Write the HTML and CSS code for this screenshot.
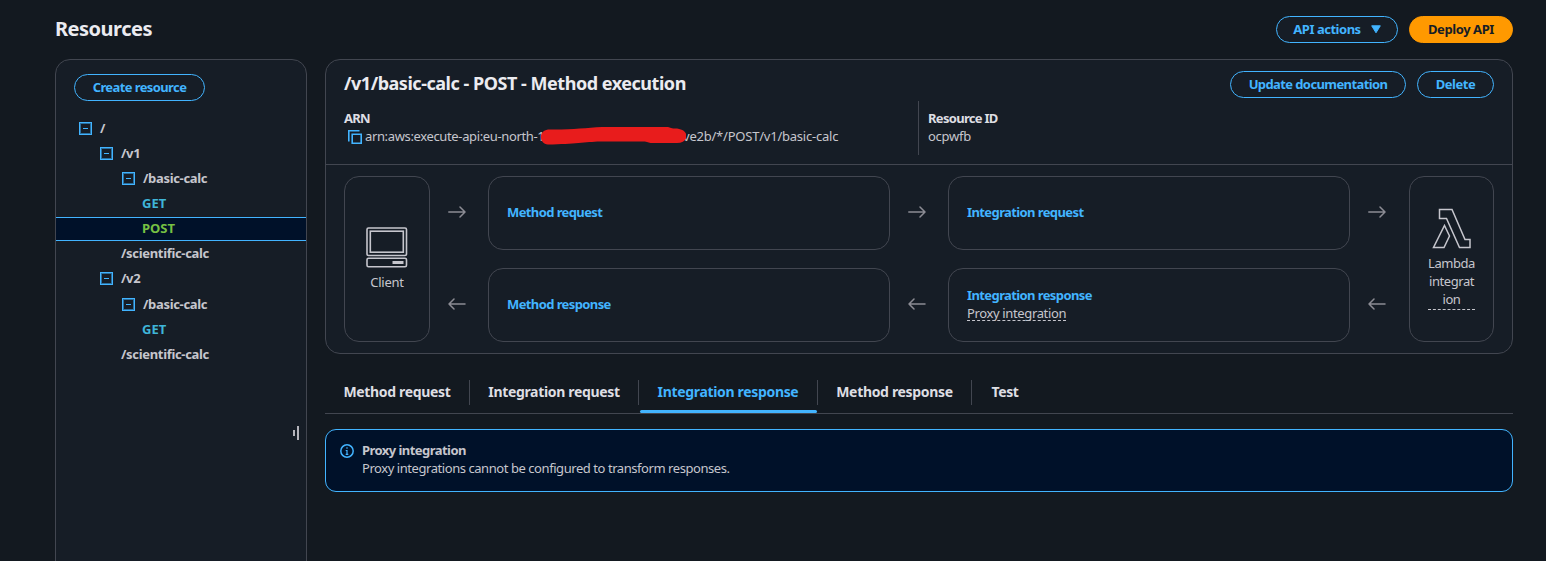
FILE: index.html
```html
<!DOCTYPE html>
<html lang="en">
<head>
<meta charset="utf-8">
<title>Resources</title>
<link rel="stylesheet" href="styles.css">
</head>
<body>
<div class="page">
  <header class="page-header">
    <h1 class="page-title">Resources</h1>
    <div class="actions">
      <button class="btn btn-menu"><span>API actions</span><svg class="caret" width="10" height="9" viewBox="0 0 10 9"><path d="M.7.8h8.600L5 7.800z" fill="currentColor" stroke="currentColor" stroke-linejoin="round"/></svg></button>
      <button class="btn btn-primary">Deploy API</button>
    </div>
  </header>
  <div class="columns">
    <aside class="sidebar">
      <button class="btn btn-create">Create resource</button>
      <ul class="tree">
        <li class="row d0"><i class="toggle"></i><span>/</span></li>
        <li class="row d1"><i class="toggle"></i><span>/v1</span></li>
        <li class="row d2"><i class="toggle"></i><span>/basic-calc</span></li>
        <li class="row d3 get"><span>GET</span></li>
        <li class="row d3 post selected"><span>POST</span></li>
        <li class="row d2 leaf"><span>/scientific-calc</span></li>
        <li class="row d1"><i class="toggle"></i><span>/v2</span></li>
        <li class="row d2"><i class="toggle"></i><span>/basic-calc</span></li>
        <li class="row d3 get"><span>GET</span></li>
        <li class="row d2 leaf"><span>/scientific-calc</span></li>
      </ul>
      <div class="grip"><i></i><i></i></div>
    </aside>
    <main class="main">
      <section class="panel">
        <div class="panel-head">
          <div class="panel-title-row">
            <h2 class="panel-title">/v1/basic-calc - POST - Method execution</h2>
            <div class="actions">
              <button class="btn btn-update">Update documentation</button>
              <button class="btn btn-delete">Delete</button>
            </div>
          </div>
          <div class="facts">
            <div class="fact fact-arn">
              <div class="label">ARN</div>
              <div class="value arn">
                <svg class="copy" width="14" height="14" viewBox="0 0 14 14" fill="none" stroke="currentColor" stroke-width="1.600"><path d="M4.200 4.200h9v9h-9z"/><path d="M.8 11.500V.8H11.500"/></svg>
                <span class="arn-start">arn:aws:execute-api:eu-north-1</span>
                <svg class="redaction" width="146" height="20" viewBox="0 0 146 20"><path d="M8 3.500C30 4 45 2 62 1h65c3 0 3 1.500 8 1.500 15 0 15 14.500 2 14.500h-25c-4 0-4-1.500-9-1.500H60C45 16 35 18 8 18.500-1 18-2 5 8 3.500z" fill="#e81c1c"/></svg>
                <span class="arn-end">ve2b/*/POST/v1/basic-calc</span>
              </div>
            </div>
            <div class="fact fact-id">
              <div class="label">Resource ID</div>
              <div class="value resource-id">ocpwfb</div>
            </div>
          </div>
        </div>
        <div class="flow">
          <div class="card endpoint client">
            <svg width="42" height="41" viewBox="0 0 42 41" fill="none" stroke="currentColor" stroke-width="1.600"><rect x="1" y="1" width="39.500" height="27.500" rx="1.500"/><rect x="4.300" y="4.200" width="33" height="21"/><rect x="1" y="31.300" width="39.500" height="8.500" rx="1.500"/><path d="M26.500 35.500h11" stroke-width="3"/></svg>
            <span>Client</span>
          </div>
          <svg class="arrow a1" width="18" height="12" viewBox="0 0 18 12"><path d="M.8 6h16M12 1l5 5-5 5"/></svg>
          <svg class="arrow a2" width="18" height="12" viewBox="0 0 18 12"><path d="M17 6H1M6 1 1 6l5 5"/></svg>
          <div class="card mreq"><a>Method request</a></div>
          <div class="card mres"><a>Method response</a></div>
          <svg class="arrow b1" width="18" height="12" viewBox="0 0 18 12"><path d="M.8 6h16M12 1l5 5-5 5"/></svg>
          <svg class="arrow b2" width="18" height="12" viewBox="0 0 18 12"><path d="M17 6H1M6 1 1 6l5 5"/></svg>
          <div class="card ireq"><a>Integration request</a></div>
          <div class="card ires"><a>Integration response</a><div class="hint">Proxy integration</div></div>
          <svg class="arrow c1" width="18" height="12" viewBox="0 0 18 12"><path d="M.8 6h16M12 1l5 5-5 5"/></svg>
          <svg class="arrow c2" width="18" height="12" viewBox="0 0 18 12"><path d="M17 6H1M6 1 1 6l5 5"/></svg>
          <div class="card endpoint lambda">
            <svg width="40" height="42" viewBox="0 0 40 42" fill="none" stroke="currentColor" stroke-width="1.500"><path d="M7.500 1.500H20L33 31.500h5v8H27.500L14.500 10.500h-7zM12.500 17.500 17.500 28 12 39.500H1.500z"/></svg>
            <div class="wrap">Lambda<br>integrat<br>ion</div>
          </div>
        </div>
      </section>
      <nav class="tabs">
        <div class="tab">Method request</div>
        <div class="tab">Integration request</div>
        <div class="tab active">Integration response</div>
        <div class="tab">Method response</div>
        <div class="tab">Test</div>
      </nav>
      <div class="alert">
        <svg width="14" height="14" viewBox="0 0 14 14" fill="none" stroke="currentColor" stroke-width="1.500"><circle cx="7" cy="7" r="6.200"/><path d="M7 3.300v1.500M5.700 6.500H7v4M5.700 10.300h2.600" stroke-width="1.200"/></svg>
        <div><strong>Proxy integration</strong><p>Proxy integrations cannot be configured to transform responses.</p></div>
      </div>
    </main>
  </div>
</div>
</body>
</html>
```
FILE: styles.css
```css
* { box-sizing: border-box; }
body {
  margin: 0;
  background: #131920;
  color: #c6c6cd;
  font: 13px/18px "Noto Sans", "Open Sans", sans-serif;
  letter-spacing: -0.44px;
  overflow: hidden;
}
h1, h2, p, ul { margin: 0; padding: 0; }
.page { height: 561px; padding: 16px 33px 0 55px; overflow: hidden; }
.page-header { display: flex; justify-content: space-between; height: 43px; }
.page-title { font-size: 20px; line-height: 26px; letter-spacing: -0.5px; color: #ebebf0; }
.actions { display: flex; gap: 11px; }
.btn {
  height: 27px;
  padding: 0 0 2px;
  border: 1px solid #42b4ff;
  border-radius: 14px;
  background: #161d26;
  color: #42b4ff;
  font: 700 13px/18px "Noto Sans", "Open Sans", sans-serif;
  letter-spacing: -0.6px;
  white-space: nowrap;
}
.btn-menu { width: 122px; display: flex; align-items: center; justify-content: center; gap: 10px; letter-spacing: -0.48px; }
.caret { margin-top: 2px; }
.btn-primary { width: 104px; border-color: #ff9900; background: #ff9900; color: #161d26; letter-spacing: -0.42px; }
.btn-update { width: 176px; }
.btn-delete { width: 77px; letter-spacing: -0.5px; }
.btn-create { width: 131px; margin-left: 18px; }
.columns { display: grid; grid-template-columns: 252px 1188px; gap: 18px; height: 502px; }
.sidebar {
  position: relative;
  height: 520px;
  padding-top: 14px;
  border: 1px solid #424650;
  border-radius: 15px 15px 0 0;
  background: #161d26;
}
.tree { display: flex; flex-direction: column; gap: 1.17px; margin-top: 15px; list-style: none; font-weight: 700; letter-spacing: -0.32px; }
.row { display: flex; align-items: center; height: 24px; gap: 8px; white-space: nowrap; }
.row span { padding-bottom: 1px; }
.d0 { padding-left: 23px; }
.d1 { padding-left: 44px; }
.d2 { padding-left: 66px; }
.d3 { padding-left: 86px; letter-spacing: 0; }
.leaf { padding-left: 65px; }
.get { color: #3fb5d8; }
.post { color: #76c043; }
.selected { border: solid #42b4ff; border-width: 1px 0; background: #001129; }
.toggle { display: grid; place-items: center; width: 13px; height: 13px; border: 1px solid #42b4ff; box-shadow: inset 0 0 0 1px #2a6f9f; }
.toggle::before { content: ""; width: 5px; height: 1px; background: #42b4ff; }
.grip { position: absolute; right: 7px; top: 366px; display: flex; align-items: center; gap: 2px; }
.grip i { width: 2px; height: 14px; background: #b4b4bb; }
.grip i:first-child { height: 6px; }
.panel { height: 295px; border: 1px solid #424650; border-radius: 15px; background: #161d26; }
.panel-head { height: 105px; padding: 11px 18px 0; border-bottom: 1px solid #424650; }
.panel-title-row { display: flex; justify-content: space-between; height: 30px; }
.panel-title { font-size: 18px; line-height: 24px; letter-spacing: -0.47px; color: #ebebf0; }
.facts { display: flex; }
.fact { height: 54px; padding-top: 8px; white-space: nowrap; }
.fact-arn { width: 574px; }
.fact-id { padding-left: 9px; border-left: 1px solid #424650; }
.label { font-weight: 700; letter-spacing: -0.7px; color: #dedee3; }
.resource-id { letter-spacing: -0.25px; }
.arn { display: flex; align-items: center; height: 18px; }
.copy { margin: 2px 3px 0 4px; color: #42b4ff; }
.arn-start { width: 178px; letter-spacing: -0.36px; }
.arn-end { letter-spacing: -0.22px; }
.redaction { z-index: 1; flex: none; margin: 0 -3px; }
.flow {
  display: grid;
  grid-template-columns: 86px 58px 402px 58px 402px 58px 86px;
  grid-template-rows: 74px 74px;
  row-gap: 18px;
  padding: 11px 18px;
}
.card { display: flex; flex-direction: column; justify-content: center; align-items: flex-start; padding: 0 18px 2px; border: 1px solid #424650; border-radius: 15px; }
.card a { font-weight: 700; letter-spacing: -0.6px; color: #42b4ff; }
.endpoint { grid-row: 1 / 3; align-items: center; padding: 0; text-align: center; gap: 5px; }
.client { grid-column: 1; letter-spacing: -0.25px; }
.lambda { grid-column: 7; margin-left: 1px; gap: 4px; }
.arrow { place-self: center; margin: 0 4px 2px 0; fill: none; stroke: #8c8c94; stroke-width: 1.5; stroke-linecap: round; stroke-linejoin: round; }
.a1, .a2 { grid-column: 2; }
.b1, .b2 { grid-column: 4; }
.c1, .c2 { grid-column: 6; }
.a1, .b1, .c1, .mreq, .ireq { grid-row: 1; }
.a2, .b2, .c2, .mres, .ires { grid-row: 2; }
.mreq, .mres { grid-column: 3; }
.ireq, .ires { grid-column: 5; }
.hint { height: 17px; margin-bottom: 1px; border-bottom: 1px dashed #c6c6cd; letter-spacing: -0.36px; }
.wrap { width: 47px; padding-bottom: 1px; border-bottom: 1px dashed #c6c6cd; white-space: nowrap; }
.tabs { display: flex; height: 60px; padding-top: 26px; border-bottom: 1px solid #424650; font-size: 14px; font-weight: 700; letter-spacing: -0.33px; color: #dedee3; }
.tab { position: relative; height: 25px; line-height: 23px; text-align: center; border-right: 1px solid #424650; white-space: nowrap; }
.tab:nth-child(1) { width: 145px; }
.tab:nth-child(2) { width: 169px; }
.tab:nth-child(3) { width: 179px; }
.tab:nth-child(4) { width: 154px; }
.tab:nth-child(5) { width: 66px; border: 0; }
.active { color: #42b4ff; }
.active::after { content: ""; position: absolute; left: 1px; right: 0; bottom: -8px; height: 3px; border-radius: 2px; background: #42b4ff; }
.alert { display: flex; gap: 8px; height: 63px; margin-top: 15px; padding: 11px 14px; border: 1px solid #42b4ff; border-radius: 11px; background: #001129; }
.alert strong { letter-spacing: -0.55px; }
.alert svg { margin-top: 3px; color: #42b4ff; }
```
